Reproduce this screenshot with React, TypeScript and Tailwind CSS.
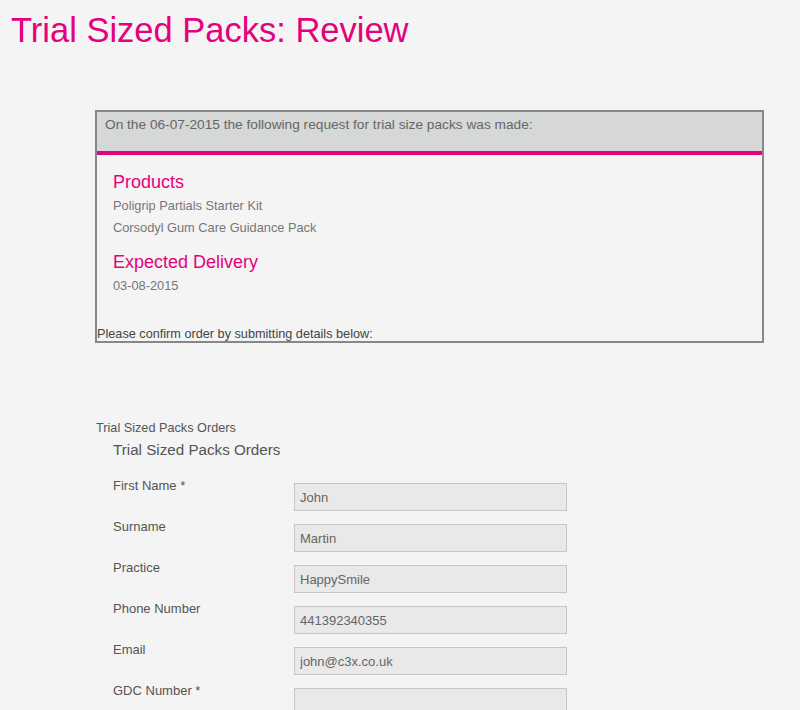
const fields = [
  { label: "First Name *", value: "John" },
  { label: "Surname", value: "Martin" },
  { label: "Practice", value: "HappySmile" },
  { label: "Phone Number", value: "441392340355" },
  { label: "Email", value: "john@c3x.co.uk" },
  { label: "GDC Number *", value: "" },
];

export default function App() {
  return (
    <div className="min-h-[710px] bg-[#f3f4f3] font-['Liberation_Sans',Arial,sans-serif] pb-10">
      <h1 className="pl-[11px] pt-[10px] text-[34.5px] leading-[40px] text-[#e5007d]">
        Trial Sized Packs: Review
      </h1>

      <div className="ml-[95px] mt-[60px] w-[669px]">
        <div className="border-2 border-[#878787]">
          <div className="h-[39px] bg-[#d5d8d6] pl-[8px] pt-[5px] text-[13.7px] leading-[16px] text-[#666]">
            On the 06-07-2015 the following request for trial size packs was made:
          </div>
          <div className="h-[4px] bg-[#e5007d]" />
          <div className="pl-[16px] pt-[16px]">
            <h3 className="text-[18px] leading-[22px] text-[#e5007d]">Products</h3>
            <p className="mt-[2px] text-[12.8px] leading-[22px] text-[#777]">Poligrip Partials Starter Kit</p>
            <p className="text-[12.8px] leading-[22px] text-[#777]">Corsodyl Gum Care Guidance Pack</p>
            <h3 className="mt-[12px] text-[18px] leading-[22px] text-[#e5007d]">Expected Delivery</h3>
            <p className="mt-[2px] text-[12.8px] leading-[22px] text-[#777]">03-08-2015</p>
          </div>
          <p className="mt-[30px] text-[12.7px] leading-[14px] text-[#444]">
            Please confirm order by submitting details below:
          </p>
        </div>

        <form className="mt-[77px]">
          <p className="pl-[1px] text-[12.7px] leading-[16px] text-[#555]">Trial Sized Packs Orders</p>
          <div className="pl-[18px]">
            <h4 className="mt-[5px] text-[15.2px] leading-[18px] text-[#555]">Trial Sized Packs Orders</h4>
            <div className="mt-[19px] flex flex-col gap-[8px]">
              {fields.map((f) => (
                <div key={f.label} className="flex items-start">
                  <label className="w-[181px] text-[13px] leading-[16px] text-[#555]">{f.label}</label>
                  <input
                    readOnly
                    defaultValue={f.value}
                    className="mt-[5px] h-[28px] w-[273px] border border-[#c4c5c4] bg-[#e8e9e8] px-[5px] text-[13px] text-[#666] outline-none"
                  />
                </div>
              ))}
            </div>
          </div>
        </form>
      </div>
    </div>
  );
}
